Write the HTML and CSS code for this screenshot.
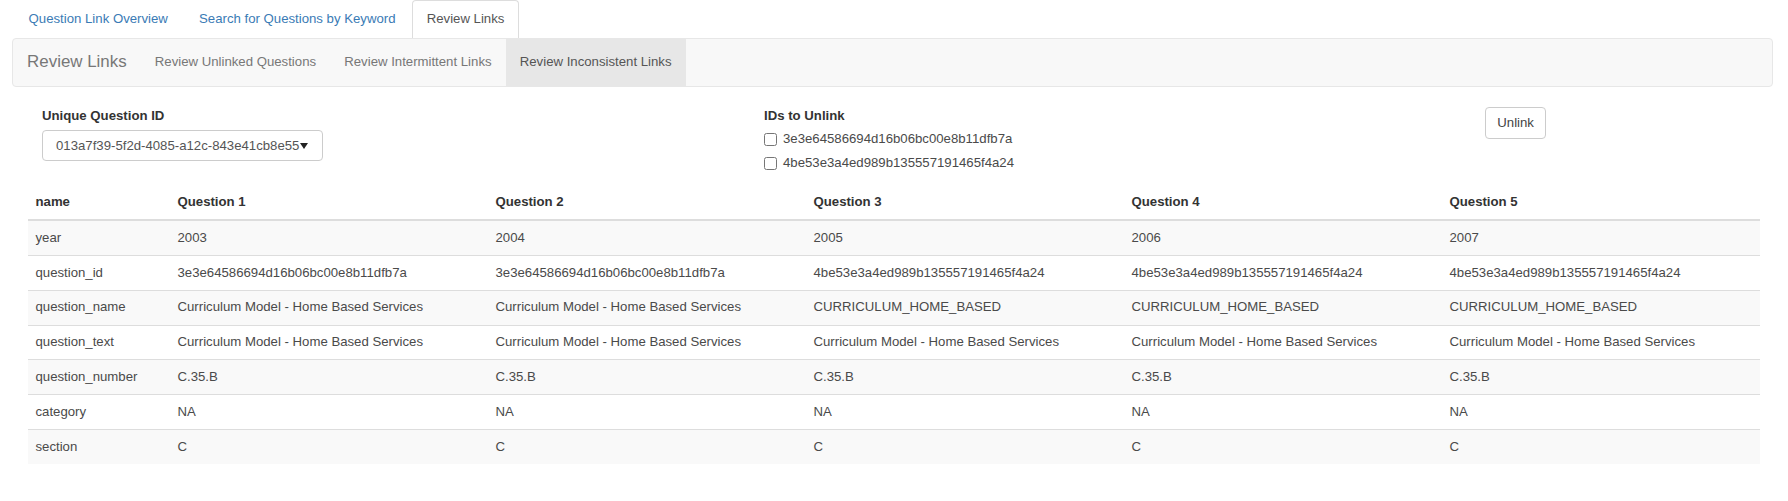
FILE: index.html
```html
<!DOCTYPE html>
<html>
<head>
<meta charset="utf-8">
<link rel="stylesheet" href="styles.css">
</head>
<body>
<ul class="tabs">
  <li class="tab"><a>Question Link Overview</a></li>
  <li class="tab"><a>Search for Questions by Keyword</a></li>
  <li class="tab active"><a>Review Links</a></li>
</ul>
<nav class="navbar">
  <span class="brand">Review Links</span>
  <a class="nav-item">Review Unlinked Questions</a>
  <a class="nav-item">Review Intermittent Links</a>
  <a class="nav-item active">Review Inconsistent Links</a>
</nav>
<main class="content">
  <div class="form-row">
    <div class="col">
      <div class="label">Unique Question ID</div>
      <div class="select"><span>013a7f39-5f2d-4085-a12c-843e41cb8e55</span><span class="caret"></span></div>
    </div>
    <div class="col">
      <div class="label">IDs to Unlink</div>
      <label class="check"><input type="checkbox"><span>3e3e64586694d16b06bc00e8b11dfb7a</span></label>
      <label class="check second"><input type="checkbox"><span>4be53e3a4ed989b135557191465f4a24</span></label>
    </div>
    <div class="col">
      <button class="btn">Unlink</button>
    </div>
  </div>
  <table class="grid">
    <colgroup><col class="c0"><col class="cq"><col class="cq"><col class="cq"><col class="cq"><col class="cq"></colgroup>
    <thead>
      <tr><th>name</th><th>Question 1</th><th>Question 2</th><th>Question 3</th><th>Question 4</th><th>Question 5</th></tr>
    </thead>
    <tbody>
      <tr><td>year</td><td>2003</td><td>2004</td><td>2005</td><td>2006</td><td>2007</td></tr>
      <tr><td>question_id</td><td>3e3e64586694d16b06bc00e8b11dfb7a</td><td>3e3e64586694d16b06bc00e8b11dfb7a</td><td>4be53e3a4ed989b135557191465f4a24</td><td>4be53e3a4ed989b135557191465f4a24</td><td>4be53e3a4ed989b135557191465f4a24</td></tr>
      <tr><td>question_name</td><td>Curriculum Model - Home Based Services</td><td>Curriculum Model - Home Based Services</td><td>CURRICULUM_HOME_BASED</td><td>CURRICULUM_HOME_BASED</td><td>CURRICULUM_HOME_BASED</td></tr>
      <tr><td>question_text</td><td>Curriculum Model - Home Based Services</td><td>Curriculum Model - Home Based Services</td><td>Curriculum Model - Home Based Services</td><td>Curriculum Model - Home Based Services</td><td>Curriculum Model - Home Based Services</td></tr>
      <tr><td>question_number</td><td>C.35.B</td><td>C.35.B</td><td>C.35.B</td><td>C.35.B</td><td>C.35.B</td></tr>
      <tr><td>category</td><td>NA</td><td>NA</td><td>NA</td><td>NA</td><td>NA</td></tr>
      <tr><td>section</td><td>C</td><td>C</td><td>C</td><td>C</td><td>C</td></tr>
    </tbody>
  </table>
</main>
</body>
</html>
```
FILE: styles.css
```css
html, body {
  margin: 0;
  padding: 0;
  background: #fff;
}
body {
  font-family: "Liberation Sans", Arial, sans-serif;
  font-size: 13.2px;
  line-height: 18.8px;
  color: #333;
}
.tabs {
  list-style: none;
  margin: 0;
  padding: 0 0 0 14px;
  display: flex;
  height: 38px;
}
.tab {
  margin-right: 2px;
}
.tab a {
  display: block;
  padding: 9.4px 13.6px 9px;
  border: 1px solid transparent;
  border-bottom: 0;
  border-radius: 4px 4px 0 0;
  color: #3a7bb5;
}
.tab.active a {
  color: #555;
  background: #fff;
  border-color: #ddd;
  height: 19px;
}
.navbar {
  display: flex;
  margin: 0 15px 0 12px;
  height: 47px;
  background: #f8f8f8;
  border: 1px solid #e7e7e7;
  border-radius: 4px;
}
.brand {
  font-size: 16.9px;
  line-height: 18.8px;
  padding: 14.1px;
  color: #777;
}
.nav-item {
  padding: 14.1px;
  color: #777;
}
.nav-item.active {
  background: #e7e7e7;
  color: #555;
}
.content {
  padding: 20px 28px 0;
}
.form-row {
  display: grid;
  grid-template-columns: 722px 721px auto;
  padding-left: 14px;
  height: 78.5px;
}
.label {
  font-weight: bold;
  margin-bottom: 4.7px;
}
.select {
  display: flex;
  align-items: center;
  box-sizing: border-box;
  width: 281px;
  height: 31px;
  padding: 0 0 0 13px;
  border: 1px solid #ccc;
  border-radius: 4px;
  color: #555;
}
.caret {
  width: 0;
  height: 0;
  margin-left: 1px;
  border-left: 4.5px solid transparent;
  border-right: 4.5px solid transparent;
  border-top: 6px solid #222;
}
.check {
  display: flex;
  align-items: center;
  height: 18.8px;
  margin-top: 4px;
  color: #4a4a4a;
}
.check.second {
  margin-top: 5px;
}
.check input {
  margin: 0 6px 0 0;
  width: 13px;
  height: 13px;
}
.btn {
  margin: 0;
  font-family: inherit;
  font-size: 13.2px;
  line-height: 18.8px;
  color: #444;
  background: #fff;
  border: 1px solid #ccc;
  border-radius: 4px;
  padding: 5.6px 11.3px;
}
.grid {
  width: 100%;
  border-collapse: collapse;
  table-layout: fixed;
}
.c0 { width: 142px; }
.cq { width: 318px; }
.grid th, .grid td {
  text-align: left;
  padding: 7.5px;
  line-height: 18.8px;
  white-space: nowrap;
}
.grid th {
  font-weight: bold;
  color: #333;
  border-bottom: 2px solid #ddd;
}
.grid td {
  color: #4a4a4a;
  border-top: 1px solid #ddd;
}
.grid tbody tr:nth-child(odd) {
  background: #f9f9f9;
}
```
